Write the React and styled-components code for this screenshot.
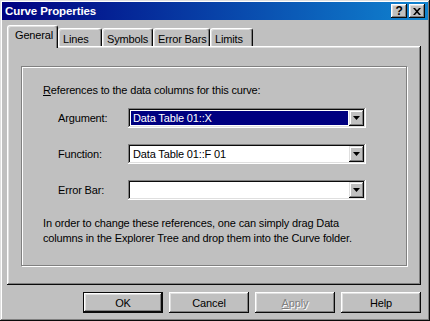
import styled, { createGlobalStyle } from 'styled-components';

const GlobalStyle = createGlobalStyle`
	html, body {
		margin: 0;
		padding: 0;
		background: #c0c0c0;
	}
	body {
		font-family: "Liberation Sans", Arial, sans-serif;
		font-size: 11px;
		letter-spacing: -0.15px;
		color: #000;
	}
`;

const Window = styled.div`
	box-sizing: border-box;
	width: 430px;
	height: 321px;
	padding: 2px;
	background: #c0c0c0;
	display: flex;
	flex-direction: column;
	box-shadow: inset -1px -1px #0a0a0a, inset 1px 1px #dfdfdf, inset -2px -2px #808080, inset 2px 2px #fff;
`;

const TitleBar = styled.div`
	height: 18px;
	padding: 0 3px 0 3px;
	display: flex;
	align-items: center;
	justify-content: space-between;
	background: linear-gradient(90deg, #000080, #1084d0);
`;

const TitleText = styled.span`
	color: #fff;
	font-weight: 700;
	font-size: 11.5px;
	letter-spacing: -0.1px;
`;

const TitleButtons = styled.div`
	display: flex;
	gap: 2px;
`;

const TitleButton = styled.div`
	width: 16px;
	height: 14px;
	box-sizing: border-box;
	background: #c0c0c0;
	display: flex;
	align-items: center;
	justify-content: center;
	font-weight: 700;
	font-size: 12px;
	line-height: 1;
	box-shadow: inset -1px -1px #0a0a0a, inset 1px 1px #fff, inset -2px -2px #808080, inset 2px 2px #dfdfdf;
`;

const Body = styled.div`
	flex: 1;
	display: flex;
	flex-direction: column;
	padding: 5px 7px 6px 5px;
`;

const TabStrip = styled.div`
	height: 21px;
	display: flex;
	align-items: flex-end;
`;

const Tab = styled.div`
	position: relative;
	box-sizing: border-box;
	width: ${p => p.$w}px;
	height: ${p => (p.$active ? 23 : 18)}px;
	margin-bottom: ${p => (p.$active ? -2 : 0)}px;
	z-index: ${p => (p.$active ? 2 : 0)};
	padding: ${p => (p.$active ? '3px 0 0 7px' : '4px 0 0 4px')};
	background: #c0c0c0;
	border-top: 1px solid #fff;
	border-left: 1px solid #fff;
	border-right: 1px solid #0a0a0a;
	border-radius: 3px 3px 0 0;
	box-shadow: inset -1px 0 #808080, inset 1px 1px #dfdfdf;
	white-space: nowrap;
`;

const Panel = styled.div`
	flex: 1;
	display: flex;
	padding: 20px 14px 19px 14px;
	box-shadow: inset -1px -1px #0a0a0a, inset 1px 1px #fff, inset -2px -2px #808080, inset 2px 2px #dfdfdf;
`;

const GroupBox = styled.div`
	flex: 1;
	box-sizing: border-box;
	border: 1px solid #808080;
	box-shadow: inset 1px 1px #fff, 1px 1px #fff;
	padding: 16px 20px 0 21px;
	display: flex;
	flex-direction: column;
`;

const Intro = styled.div`
	line-height: 14px;
`;

const Rows = styled.div`
	margin: 11px 0 0 15px;
	display: flex;
	flex-direction: column;
	gap: 16px;
`;

const Row = styled.div`
	display: flex;
	align-items: center;
`;

const Label = styled.div`
	width: 70px;
`;

const Combo = styled.div`
	box-sizing: border-box;
	width: 238px;
	height: 20px;
	padding: 2px;
	background: #fff;
	display: flex;
	box-shadow: inset -1px -1px #fff, inset 1px 1px #808080, inset -2px -2px #dfdfdf, inset 2px 2px #0a0a0a;
`;

const ComboValue = styled.div`
	flex: 1;
	display: flex;
	align-items: center;
	padding-left: 2px;
	margin: 1px;
	background: ${p => (p.$selected ? '#000080' : 'transparent')};
	color: ${p => (p.$selected ? '#fff' : '#000')};
`;

const DropButton = styled.div`
	width: 15px;
	background: #c0c0c0;
	display: flex;
	align-items: center;
	justify-content: center;
	box-shadow: inset -1px -1px #0a0a0a, inset 1px 1px #dfdfdf, inset -2px -2px #808080, inset 2px 2px #fff;
`;

const Note = styled.div`
	margin-top: 16px;
	line-height: 15px;
`;

const ButtonRow = styled.div`
	margin-top: 7px;
	display: flex;
	justify-content: flex-end;
	gap: 6px;
`;

const Button = styled.div`
	box-sizing: border-box;
	width: 80px;
	height: 21px;
	display: flex;
	align-items: center;
	justify-content: center;
	background: #c0c0c0;
	color: ${p => (p.$disabled ? '#808080' : '#000')};
	text-shadow: ${p => (p.$disabled ? '1px 1px #fff' : 'none')};
	border: ${p => (p.$default ? '1px solid #0a0a0a' : 'none')};
	box-shadow: inset -1px -1px #0a0a0a, inset 1px 1px #fff, inset -2px -2px #808080, inset 2px 2px #dfdfdf;
`;

const Key = styled.span`
	text-decoration: underline;
`;

const tabs = [
	{ name: 'General', w: 51, active: true },
	{ name: 'Lines', w: 44 },
	{ name: 'Symbols', w: 51 },
	{ name: 'Error Bars', w: 57 },
	{ name: 'Limits', w: 43 },
];

const DownArrow = () => (
	<svg width="7" height="4" viewBox="0 0 7 4">
		<path d="M0 0h7L3.5 4z" fill="#000" />
	</svg>
);

const CloseGlyph = () => (
	<svg width="8" height="7" viewBox="0 0 8 7">
		<path d="M0 0h2l2 2.2L6 0h2L5 3.5 8 7H6L4 4.8 2 7H0l3-3.5z" fill="#000" />
	</svg>
);

const ComboBox = ({ value, selected }) => (
	<Combo>
		<ComboValue $selected={selected}>{value}</ComboValue>
		<DropButton>
			<DownArrow />
		</DropButton>
	</Combo>
);

const App = () => (
	<>
		<GlobalStyle />
		<Window>
			<TitleBar>
				<TitleText>Curve Properties</TitleText>
				<TitleButtons>
					<TitleButton>?</TitleButton>
					<TitleButton>
						<CloseGlyph />
					</TitleButton>
				</TitleButtons>
			</TitleBar>
			<Body>
				<TabStrip>
					{tabs.map(t => (
						<Tab key={t.name} $w={t.w} $active={t.active}>
							{t.name}
						</Tab>
					))}
				</TabStrip>
				<Panel>
					<GroupBox>
						<Intro>
							<Key>R</Key>eferences to the data columns for this curve:
						</Intro>
						<Rows>
							<Row>
								<Label>Argument:</Label>
								<ComboBox value="Data Table 01::X" selected />
							</Row>
							<Row>
								<Label>Function:</Label>
								<ComboBox value="Data Table 01::F 01" />
							</Row>
							<Row>
								<Label>Error Bar:</Label>
								<ComboBox value="" />
							</Row>
						</Rows>
						<Note>
							In order to change these references, one can simply drag Data
							<br />
							columns in the Explorer Tree and drop them into the Curve folder.
						</Note>
					</GroupBox>
				</Panel>
				<ButtonRow>
					<Button $default>OK</Button>
					<Button>Cancel</Button>
					<Button $disabled>
						<Key>A</Key>pply
					</Button>
					<Button>Help</Button>
				</ButtonRow>
			</Body>
		</Window>
	</>
);

export default App;
